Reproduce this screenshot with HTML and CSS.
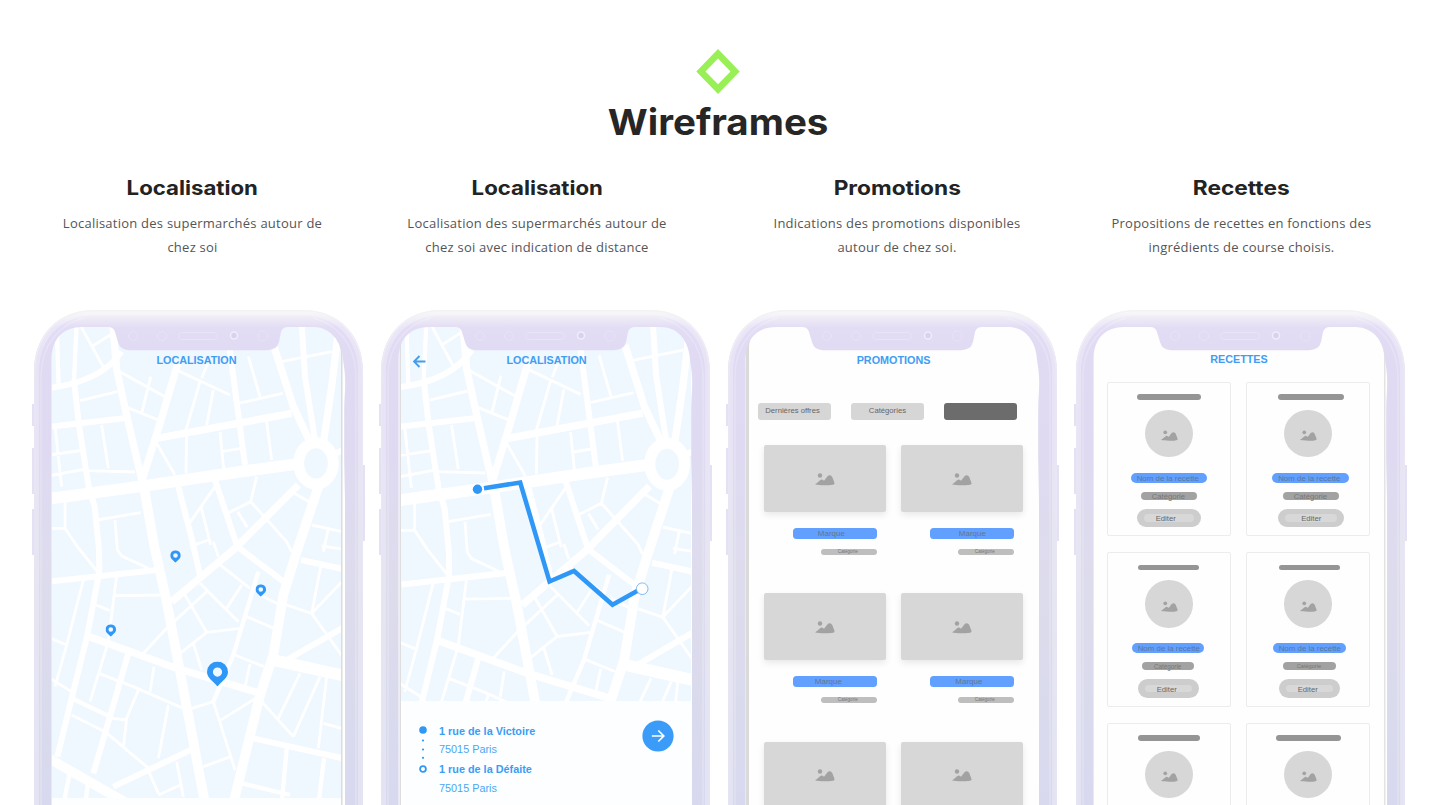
FILE: index.html
```html
<!DOCTYPE html>
<html lang="fr">
<head>
<meta charset="utf-8">
<title>Wireframes</title>
<link rel="stylesheet" href="styles.css">
</head>
<body>
<svg class="defs" aria-hidden="true">
  <defs>
    <linearGradient id="shell" gradientUnits="userSpaceOnUse" x1="0" y1="0" x2="0" y2="495">
      <stop offset="0" stop-color="#f7f6f7"/><stop offset=".012" stop-color="#f0eef6"/><stop offset=".036" stop-color="#e3dcf5"/>
      <stop offset=".09" stop-color="#e0daf3"/><stop offset=".3" stop-color="#dfdaf1"/><stop offset=".55" stop-color="#dddcec"/><stop offset="1" stop-color="#d8d9ef"/>
    </linearGradient>
    <linearGradient id="edge" gradientUnits="userSpaceOnUse" x1="0" y1="0" x2="0" y2="495">
      <stop offset="0" stop-color="#f3f3f3"/><stop offset=".15" stop-color="#eae6f5"/><stop offset="1" stop-color="#e4e4f4"/>
    </linearGradient>
    <symbol id="frame" viewBox="-4 0 337 495" overflow="visible">
      <path class="key" d="M-1 94v22M-1 138v46M-1 199v46M330 155v76"/>
      <path fill="url(#shell)" fill-rule="evenodd" d="M0 500V62C0 25 24 0 60 0H269C305 0 329 25 329 62V500ZM17.600 500V48C18 28 30 17 48 17H74Q79.500 17 81 22L84 32Q86 40 95 40.200H233Q243 40 245 32L247 22Q248.500 17 254 17H280C296 17 306 29 308.500 45C309 52 311.200 60 311.200 72C311.200 82 310.200 90 310.200 100V150L311 190V500Z"/>
      <path class="glow" d="M2.500 500V62C3 27 26 3 60 3H269C303 3 326 27 326.500 62V500"/>
      <path fill="none" stroke="url(#edge)" stroke-width="1.500" d="M.8 500V62C.8 25.500 24.500 .8 60 .8H269C304.500 .8 328.200 25.500 328.200 62V500"/>
      <path class="ridge" d="M7 500V64C8 34 26 14 50 8M322 500V64C321 34 303 14 279 8"/>
      <g class="sensor"><circle cx="99" cy="26" r="4.500"/><circle cx="128" cy="26" r="4.500"/><rect x="144.500" y="22.500" width="39" height="7" rx="3.500"/><circle cx="229" cy="26" r="5"/></g>
      <circle class="lens" cx="200" cy="25.500" r="3.500"/>
    </symbol>
    <g id="streets">
      <rect x="100" y="60" width="960" height="1500" fill="#eff7ff"/>
      <g fill="none" stroke="#fff" stroke-linejoin="round">
        <path stroke-width="35" d="M130 629L430 588L720 545L890 522M820 1110L1060 1163"/>
        <path stroke-width="29" d="M430 580L462 765L500 935L540 1145L615 1540M955 590L890 785L850 915L820 1095L780 1215L700 1540M130 1396L390 1545"/>
        <path stroke-width="22" d="M338 100L350 240L382 385L430 590M535 215L480 400L425 575M470 445L875 370M822 170L880 350L932 460M1020 80L995 290L970 460M895 585L705 775L515 935M262 1038L530 1135L770 1207"/>
        <path stroke-width="18" d="M130 296Q300 280 365 185M905 100L915 260L945 450M688 170L735 525M222 270L236 400L266 590L284 650L297 780L298 845L262 1035L215 1225L172 1400M150 410L372 385M156 874L470 840M645 570L712 770L860 882M535 590L575 745L600 855M385 1090L340 1245L280 1450M340 1490L572 1380M760 1345L1060 1412M903 810L1060 844M860 1110L1060 995"/>
        <path stroke-width="13" d="M170 100L176 290M230 100L222 270M775 845L700 1095L640 1235M215 1225L330 1280M860 1375L845 1545M972 1405L955 1545M725 1480L870 1515M210 1445L190 1545M265 1475L255 1545"/>
        <path stroke-width="8.500" d="M238 100L312 235M278 168L335 132M240 332L352 305M350 240L495 320M452 260L425 370M375 350L475 390M530 240L690 315M600 275L555 430M640 300L620 405M605 265L625 215M715 340L848 310M745 200L780 320M845 215L995 185M470 460L525 555M560 430L558 550M660 425L672 545M665 485L725 475M800 395L815 510M150 495L250 480M165 410L185 590M150 557L258 537M305 405L325 535M255 542L405 546M645 590L568 700M603 650L632 765M875 605L935 640M770 560L752 635L678 672M752 635L860 755L875 785M713 665L742 712M935 705L1060 732M985 715L970 785M150 715L195 715L232 770L292 845M195 635L195 715M290 690L422 668M345 690L352 780L365 798L445 835M570 770L625 750M640 755L655 800M965 768L1060 782M250 870L200 1065L165 1190M288 945L330 962M350 855L325 1055L270 1235M345 917L482 915M140 1040L200 1065M430 1090L500 1015L620 905M297 1150L400 1190L550 1255M462 1130L450 1205M415 1200L380 1285L370 1375M335 1285L382 1290M150 1165L215 1205M215 1275L315 1325L440 1430L475 1510M505 1245L475 1405M530 1415L550 1520M475 1515L548 1482M540 1090L620 1027L720 1015M555 915L620 1027M580 1060L605 1140M600 880L715 995M655 820L750 895M725 885L680 955M640 1235L705 1440M575 1255L640 1235M655 1295L775 1220M610 1430L692 1400M780 915L840 945M740 980L822 1015M705 1095L792 1130M750 1122L735 1190M860 945L935 970L1050 850M962 830L935 970L1060 1145M900 1150L835 1285M960 1160L880 1340M980 1160L955 1375M785 1235L880 1340M970 1300L1060 1325"/>
        <path stroke-width="18" d="M995 495L1050 472"/>
      </g>
      <ellipse cx="948" cy="520" rx="52" ry="62" fill="#eff7ff" stroke="#fff" stroke-width="33"/>
    </g>
    <symbol id="pin" viewBox="0 0 21 25"><path fill="#2f98f7" fill-rule="evenodd" d="M10.500 0A10.500 10.500 0 0 0 0 10.500C0 16.500 6 19.500 10.500 25C15 19.500 21 16.500 21 10.500A10.500 10.500 0 0 0 10.500 0ZM10.500 6A4.600 4.600 0 1 1 10.500 15.200A4.600 4.600 0 1 1 10.500 6Z"/></symbol>
    <symbol id="photo" viewBox="0 0 20 13"><path fill="#a2a2a2" d="M0 11.300C3 10 4.500 7 6.500 6.500C8 6.200 8.500 8.300 9.500 7.300C11 5.700 12.500 2.300 14.300 2.300C16.500 2.300 17.200 3.500 18 6C18.600 8 19.500 9 19.500 10.500C19.500 12 15.500 12.300 10 12.300C5 12.300 2 12 0 11.300Z"/><circle cx="5" cy="2.500" r="2.200" fill="#a2a2a2"/></symbol>
  </defs>
</svg>
<main class="page">
  <header class="hero">
    <svg class="logo" viewBox="0 0 44 45"><path fill="#99f056" fill-rule="evenodd" d="M22 0L43.700 22.500L22 45L.3 22.500ZM22 9.500L9.500 22.400L22 35.200L34.500 22.400Z"/></svg>
    <h1>Wireframes</h1>
  </header>
  <div class="intro">
    <div class="pair">
      <section><h2>Localisation</h2><p>Localisation des supermarchés autour de<br>chez soi</p></section>
      <section><h2>Localisation</h2><p>Localisation des supermarchés autour de<br>chez soi avec indication de distance</p></section>
    </div>
    <div class="pair">
      <section><h2 class="wide">Promotions</h2><p>Indications des promotions disponibles<br>autour de chez soi.</p></section>
      <section><h2 class="wide">Recettes</h2><p>Propositions de recettes en fonctions des<br>ingrédients de course choisis.</p></section>
    </div>
  </div>
  <div class="phones">
    <article class="phone p1">
      <div class="screen">
        <h3 class="title over">LOCALISATION</h3>
        <svg class="map" viewBox="52 327 289 471">
          <use href="#streets" transform="translate(0 290) scale(.33333)"/>
          <use href="#pin" x="170.200" y="550.200" width="10.600" height="12.600"/>
          <use href="#pin" x="255.500" y="584.200" width="10.600" height="12.600"/>
          <use href="#pin" x="105.500" y="624.200" width="10.600" height="12.600"/>
          <use href="#pin" x="207" y="661.500" width="21" height="25"/>
        </svg>
      </div>
      <svg class="frame"><use href="#frame"/></svg>
    </article>
    <article class="phone p2">
      <div class="screen">
        <svg class="back" viewBox="0 0 13 13"><path d="M12.500 6.500H1M6.500 1L1 6.500L6.500 12"/></svg>
        <h3 class="title over">LOCALISATION</h3>
        <svg class="map" viewBox="401 327 290 374">
          <use href="#streets" transform="translate(349.300 287.300) scale(.3353 .34)"/>
          <path fill="none" stroke="#2f98f7" stroke-width="4.500" d="M484 488.300L520.200 482.500L549.500 581.500L574 571L612.500 604.800L638 590.500"/>
          <circle cx="477.500" cy="489.300" r="4.700" fill="#2f98f7"/>
          <circle cx="642.200" cy="588.700" r="5.800" fill="#fff" stroke="#5eaaf2" stroke-width=".8"/>
        </svg>
        <div class="route">
          <svg class="steps" viewBox="0 0 8 48"><circle cx="4" cy="4" r="3.800"/><circle cx="4" cy="14.500" r="1.100"/><circle cx="4" cy="23.500" r="1.100"/><circle cx="4" cy="31.800" r="1.100"/><circle class="ring" cx="4" cy="43" r="2.900"/></svg>
          <dl class="stops"><dt>1 rue de la Victoire</dt><dd>75015 Paris</dd><dt class="to">1 rue de la Défaite</dt><dd class="last">75015 Paris</dd></dl>
          <svg class="go" viewBox="0 0 32 32"><circle cx="16" cy="16" r="15.600"/><path d="M9.800 16H21.500M16.300 10.500L21.800 16L16.300 21.500"/></svg>
        </div>
      </div>
      <svg class="frame"><use href="#frame"/></svg>
    </article>
    <article class="phone p3">
      <div class="screen">
        <h3 class="title">PROMOTIONS</h3>
        <div class="chips"><span>Dernières offres</span><span class="mid">Catégories</span><span class="dark"></span></div>
        <div class="offers">
          <div class="offer"><div class="thumb"><svg><use href="#photo"/></svg></div><div class="brand">Marque</div><div class="cat">Catégorie</div></div>
          <div class="offer"><div class="thumb"><svg><use href="#photo"/></svg></div><div class="brand">Marque</div><div class="cat">Catégorie</div></div>
          <div class="offer"><div class="thumb"><svg><use href="#photo"/></svg></div><div class="brand">Marque</div><div class="cat">Catégorie</div></div>
          <div class="offer"><div class="thumb"><svg><use href="#photo"/></svg></div><div class="brand">Marque</div><div class="cat">Catégorie</div></div>
          <div class="offer"><div class="thumb"><svg><use href="#photo"/></svg></div></div>
          <div class="offer"><div class="thumb"><svg><use href="#photo"/></svg></div></div>
        </div>
      </div>
      <svg class="frame"><use href="#frame"/></svg>
    </article>
    <article class="phone p4">
      <div class="screen">
        <h3 class="title">RECETTES</h3>
        <div class="recipes">
          <div class="recipe a"><i class="line"></i><div class="dish"><svg><use href="#photo"/></svg></div><div class="name">Nom de la recette</div><div class="kind">Catégorie</div><div class="edit"><span>Editer</span></div></div>
          <div class="recipe b"><i class="line"></i><div class="dish"><svg><use href="#photo"/></svg></div><div class="name">Nom de la recette</div><div class="kind">Catégorie</div><div class="edit"><span>Editer</span></div></div>
          <div class="recipe c"><i class="line"></i><div class="dish"><svg><use href="#photo"/></svg></div><div class="name">Nom de la recette</div><div class="kind">Catégorie</div><div class="edit"><span>Editer</span></div></div>
          <div class="recipe d"><i class="line"></i><div class="dish"><svg><use href="#photo"/></svg></div><div class="name">Nom de la recette</div><div class="kind">Catégorie</div><div class="edit"><span>Editer</span></div></div>
          <div class="recipe e"><i class="line"></i><div class="dish"><svg><use href="#photo"/></svg></div></div>
          <div class="recipe f"><i class="line"></i><div class="dish"><svg><use href="#photo"/></svg></div></div>
        </div>
      </div>
      <svg class="frame"><use href="#frame"/></svg>
    </article>
  </div>
</main>
</body>
</html>
```
FILE: styles.css
```css
* { box-sizing: border-box; }
body { margin: 0; background: #fff; overflow: hidden; }
h1, h2, h3, p, dl, dd { margin: 0; }
svg { display: block; }
.defs { position: absolute; width: 0; height: 0; }
.page { width: 1437px; height: 805px; overflow: hidden; display: flex; flex-direction: column; }

.hero { height: 167px; flex: none; padding-top: 48.500px; display: flex; flex-direction: column; align-items: center; }
.logo { width: 44px; height: 45px; margin-right: 2px; }
h1 { margin-top: 4px; font: 700 36px/48px Inter, sans-serif; color: #262626; transform: scaleX(1.07); }

.intro { height: 143px; flex: none; display: flex; gap: 15.500px; padding-left: 20.250px; }
.pair { display: flex; }
.pair section { width: 344.500px; text-align: center; }
h2 { margin-top: 8px; font: 700 20px/26px Inter, sans-serif; color: #232323; transform: scaleX(1.11); }
h2.wide { transform: scaleX(1.135); }
.intro p { margin-top: 10px; font: 13px/24px "Open Sans", sans-serif; color: #555; letter-spacing: .24px; }

.phones { display: flex; gap: 18.330px; padding-left: 33.700px; height: 495px; flex: none; }
.phone { position: relative; width: 329px; height: 495px; flex: none; padding: 17px 0 0 18.300px; font-family: "Liberation Sans", Arial, sans-serif; }
.frame { position: absolute; left: -4px; top: 0; width: 337px; height: 495px; }
.key { stroke: #dcd8f1; stroke-width: 1.500; fill: none; }
.glow { stroke: #fff; stroke-opacity: .28; stroke-width: 5; fill: none; }
.ridge { stroke: #fff; stroke-opacity: .22; stroke-width: 1.500; fill: none; }
.sensor { fill: none; stroke: #e9e3f6; stroke-width: 1; }
.lens { fill: #d9d2ef; stroke: #f0ecf9; stroke-width: 1.600; }
.screen { position: relative; width: 289px; height: 478px; overflow: hidden; background: #fdfeff; border-radius: 20px 28px 0 0; }
.p1 .screen { box-shadow: 1.500px 0 0 #dcdcdc; }
.p2 { padding-left: 20px; }
.p2 .screen { width: 290px; box-shadow: -1.500px 0 0 #dedede; }
.p3 { padding-left: 20.700px; }
.p3 .screen { width: 290px; box-shadow: -3px 0 0 #dadada; background: #fefefe; }
.p4 { padding-left: 17.300px; }
.p4 .screen { width: 291px; box-shadow: 1.500px 0 0 #e3e3e3; background: #fefefe; }
.map { width: 100%; height: 471px; }
.p2 .map { height: 374px; }
.title { width: 289px; padding-top: 26px; font-size: 10.800px; line-height: 14px; font-weight: 700; text-align: center; color: #419df3; white-space: nowrap; }
.over { position: absolute; top: 0; left: 0; }
.p2 .title { width: 291px; }
.back { position: absolute; left: 12.200px; top: 27.800px; width: 13px; height: 13px; fill: none; stroke: #459de9; stroke-width: 1.900; }

.route { display: flex; align-items: flex-start; padding: 19px 0 0 18px; }
.steps { width: 8px; height: 48px; margin-top: 6px; fill: #2f98f7; }
.steps .ring { fill: #fff; stroke: #2f98f7; stroke-width: 1.800; }
.stops { width: 215px; padding: 4px 0 0 12px; font-size: 10.850px; line-height: 14px; color: #4ba6f4; }
.stops dt { font-weight: 700; color: #3a9df5; margin-bottom: 4px; }
.stops dt.to { margin-top: 6px; margin-bottom: 5px; }
.go { width: 32px; height: 32px; margin-top: -.5px; fill: #3a9cf8; }
.go path { fill: none; stroke: #fff; stroke-width: 1.700; }

.chips { display: flex; gap: 20.400px; padding: 35.500px 0 0 8.500px; }
.chips span { width: 73px; height: 17px; border-radius: 3px; background: #d6d6d6; color: #666; font-size: 7.700px; line-height: 16.500px; text-align: center; padding-right: 3px; white-space: nowrap; }
.chips span.mid { padding-right: 0; }
.chips span.dark { background: #6c6c6c; }
.offers { display: grid; grid-template-columns: 122.500px 122.500px; column-gap: 14.500px; grid-auto-rows: 148.300px; padding: 25.500px 0 0 14.800px; }
.thumb { height: 66.500px; border-radius: 2px; background: #d7d7d7; box-shadow: 0 3px 7px rgba(0,0,0,.09); padding: 27.500px 0 0 51.500px; }
.thumb svg { width: 20px; height: 13px; }
.brand { margin: 16px 0 0 29px; width: 84px; height: 11.200px; border-radius: 3.500px; background: #62a0ff; color: #65758b; font-size: 8px; line-height: 11px; padding-left: 25px; }
.offer:nth-child(2) .brand { padding-left: 29px; }
.offer:nth-child(3) .brand { padding-left: 22px; line-height: 12px; }
.offer:nth-child(4) .brand { padding-left: 25.500px; line-height: 12px; }
.cat { margin: 10.500px 0 0 57px; width: 56px; height: 5.800px; border-radius: 3px; background: #bebebe; color: #777; font-size: 4.600px; line-height: 5px; padding-left: 17px; }

.p4 .title { width: 292px; padding-top: 25px; }
.recipes { display: grid; grid-template-columns: 123.500px 123.500px; column-gap: 15.500px; grid-auto-rows: 154.500px; row-gap: 16px; padding: 15.700px 0 0 14.200px; }
.recipe { --x: 28.500px; --w: 64.500px; border: 1px solid #ececec; border-radius: 2px; padding-top: 11.500px; }
.recipe.b { --x: 31px; --w: 65.500px; }
.recipe.c { --x: 29.500px; --w: 61px; }
.recipe.d { --x: 31.500px; --w: 61.500px; }
.recipe.e { --x: 30px; --w: 61.500px; }
.recipe.f { --x: 28.500px; --w: 65px; }
.line { display: block; margin-left: var(--x); width: var(--w); height: 5.500px; border-radius: 3px; background: #959595; }
.dish { margin: 10.300px 0 0 37.300px; width: 47.500px; height: 47.500px; border-radius: 50%; background: #d7d7d7; padding: 20.500px 0 0 15.500px; }
.dish svg { width: 17px; height: 11.500px; }
.name { margin: 15.500px 0 0 calc(var(--x) - 6px); width: calc(var(--w) + 11.500px); height: 10px; border-radius: 5px; background: #62a0ff; color: #56779f; font-size: 7.900px; line-height: 12px; padding-left: 6px; white-space: nowrap; }
.kind { margin: 8.800px 0 0 calc(var(--x) + 4.500px); width: calc(var(--w) - 9px); height: 8px; border-radius: 4px; background: #a2a2a2; color: #777; font-size: 7.700px; line-height: 9.500px; text-align: center; padding-right: 1px; }
.c .kind { font-size: 6.300px; }
.d .kind { font-size: 5.600px; }
.edit { margin: 9.200px 0 0 var(--x); width: var(--w); height: 18.500px; border-radius: 9.500px; background: #cdcdcd; padding: 5.500px 7px; color: #666; }
.edit span { display: block; height: 7.500px; border-radius: 4px; background: #d8d8d8; font-size: 7.700px; line-height: 9px; padding-left: 12px; }
.b .edit span { padding-left: 16px; }
```
